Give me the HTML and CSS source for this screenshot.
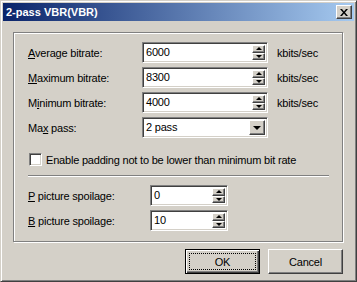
FILE: index.html
```html
<!DOCTYPE html>
<html lang="en">
<head>
    <meta charset="UTF-8">
    <title>2-pass VBR(VBR)</title>
    <link rel="stylesheet" href="styles.css">
</head>
<body>
    <div class="window">
        <div class="titlebar">
            <span class="title">2-pass VBR(VBR)</span>
            <button class="close-btn" title="Close">
                <svg width="8" height="7" viewBox="0 0 8 7"><path d="M0 0h2l2 2.5L6 0h2L5 3.5 8 7H6L4 4.5 2 7H0l3-3.5z" fill="#000"/></svg>
            </button>
        </div>

        <div class="content">
            <div class="group">
                <div class="rate-grid">
                    <label><u>A</u>verage bitrate:</label>
                    <div class="field spin"><span class="value">6000</span><span class="spinner"><i class="up"></i><i class="down"></i></span></div>
                    <span class="unit">kbits/sec</span>

                    <label><u>M</u>aximum bitrate:</label>
                    <div class="field spin"><span class="value">8300</span><span class="spinner"><i class="up"></i><i class="down"></i></span></div>
                    <span class="unit">kbits/sec</span>

                    <label>M<u>i</u>nimum bitrate:</label>
                    <div class="field spin"><span class="value">4000</span><span class="spinner"><i class="up"></i><i class="down"></i></span></div>
                    <span class="unit">kbits/sec</span>

                    <label>Ma<u>x</u> pass:</label>
                    <div class="field combo"><span class="value">2 pass</span><span class="drop"><i class="down"></i></span></div>
                    <span></span>
                </div>

                <div class="check-row">
                    <span class="checkbox"></span>
                    <span>Enable padding not to be lower than minimum bit rate</span>
                </div>

                <div class="separator"></div>

                <div class="spoil-grid">
                    <label><u>P</u> picture spoilage:</label>
                    <div class="field spin"><span class="value">0</span><span class="spinner"><i class="up"></i><i class="down"></i></span></div>

                    <label><u>B</u> picture spoilage:</label>
                    <div class="field spin"><span class="value">10</span><span class="spinner"><i class="up"></i><i class="down"></i></span></div>
                </div>
            </div>

            <div class="buttons">
                <button class="btn default"><span class="focus">OK</span></button>
                <button class="btn"><span>Cancel</span></button>
            </div>
        </div>
    </div>
</body>
</html>
```

FILE: styles.css
```css
:root {
    --face: #d4d0c8;
    --light: #ffffff;
    --shadow: #808080;
    --dark: #404040;
}

* {
    box-sizing: border-box;
}

body {
    margin: 0;
    background-color: var(--face);
    font-family: 'Liberation Sans', Arial, sans-serif;
    font-size: 11px;
    letter-spacing: -0.2px;
    color: #000;
}

.window {
    width: 357px;
    height: 282px;
    background-color: var(--face);
    border: 1px solid;
    border-color: var(--face) var(--dark) var(--dark) var(--face);
    box-shadow: inset 1px 1px 0 var(--light), inset -1px -1px 0 var(--shadow);
    padding: 2px;
}

.titlebar {
    height: 18px;
    background: linear-gradient(to right, #0a246a, #a6caf0);
    display: flex;
    align-items: center;
    justify-content: space-between;
    padding: 0 2px 0 3px;
}

.title {
    color: #fff;
    font-weight: bold;
    font-size: 11px;
    letter-spacing: 0;
}

.close-btn {
    width: 16px;
    height: 14px;
    padding: 0;
    background-color: var(--face);
    border: 1px solid;
    border-color: var(--light) var(--dark) var(--dark) var(--light);
    box-shadow: inset -1px -1px 0 var(--shadow);
    display: flex;
    align-items: center;
    justify-content: center;
}

.content {
    padding: 11px 11px 0 10px;
}

.group {
    border: 1px solid var(--shadow);
    box-shadow: 1px 1px 0 var(--light), inset 1px 1px 0 var(--light);
    padding: 9px 13px 10px 14px;
}

.rate-grid {
    display: grid;
    grid-template-columns: 114px 126px auto;
    row-gap: 4px;
    align-items: center;
}

.unit {
    padding-left: 9px;
}

.spoil-grid {
    display: grid;
    grid-template-columns: 122px 78px;
    row-gap: 4px;
    align-items: center;
}

.field {
    height: 21px;
    background-color: #fff;
    border: 1px solid;
    border-color: var(--shadow) var(--light) var(--light) var(--shadow);
    box-shadow: inset 1px 1px 0 var(--dark), inset -1px -1px 0 var(--face);
    padding: 2px 2px 2px 3px;
    display: flex;
    align-items: stretch;
}

.value {
    flex: 1;
    line-height: 15px;
}

.spinner {
    width: 13px;
    display: flex;
    flex-direction: column;
}

.spinner i,
.drop {
    flex: 1;
    background-color: var(--face);
    border: 1px solid;
    border-color: var(--light) var(--dark) var(--dark) var(--light);
    box-shadow: inset -1px -1px 0 var(--shadow);
    display: flex;
    align-items: center;
    justify-content: center;
}

.drop {
    flex: none;
    width: 16px;
}

.spinner i::after,
.drop i::after {
    content: "";
    display: block;
    width: 0;
    height: 0;
    border-left: 3px solid transparent;
    border-right: 3px solid transparent;
}

.drop i {
    display: block;
}

.spinner .up::after {
    border-bottom: 3px solid #000;
}

.spinner .down::after,
.drop .down::after {
    border-top: 3px solid #000;
}

.drop .down::after {
    border-left-width: 4px;
    border-right-width: 4px;
    border-top-width: 4px;
}

.check-row {
    display: flex;
    align-items: center;
    gap: 4px;
    margin: 15px 0 0 1px;
}

.checkbox {
    width: 13px;
    height: 13px;
    background-color: #fff;
    border: 1px solid;
    border-color: var(--shadow) var(--light) var(--light) var(--shadow);
    box-shadow: inset 1px 1px 0 var(--dark), inset -1px -1px 0 var(--face);
}

.separator {
    height: 2px;
    margin: 9px 0 8px 0;
    border-top: 1px solid var(--shadow);
    border-bottom: 1px solid var(--light);
}

.buttons {
    display: flex;
    justify-content: flex-end;
    gap: 8px;
    margin-top: 7px;
}

.btn {
    width: 75px;
    height: 25px;
    padding: 0;
    font-family: inherit;
    font-size: 11px;
    letter-spacing: inherit;
    color: #000;
    background-color: var(--face);
    border: 1px solid;
    border-color: var(--light) var(--dark) var(--dark) var(--light);
    box-shadow: inset -1px -1px 0 var(--shadow);
}

.btn.default {
    border: 1px solid #000;
    box-shadow: inset 1px 1px 0 var(--light), inset -1px -1px 0 var(--dark), inset -2px -2px 0 var(--shadow);
    padding: 3px;
}

.btn .focus {
    display: flex;
    align-items: center;
    justify-content: center;
    height: 100%;
    border: 1px dotted #000;
}
```
